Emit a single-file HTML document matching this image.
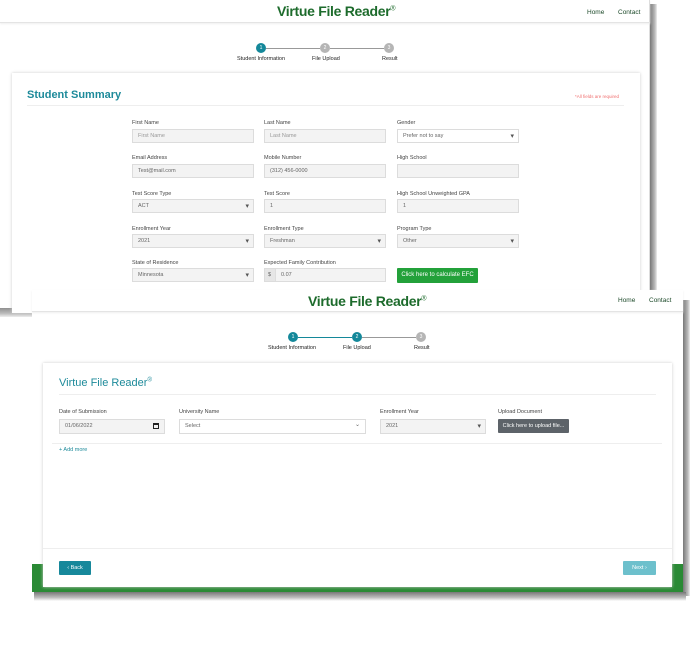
<!DOCTYPE html>
<html><head><meta charset="utf-8"><style>
*{margin:0;padding:0;box-sizing:border-box}
body{width:690px;height:651px;background:#fff;position:relative;overflow:hidden;font-family:"Liberation Sans",sans-serif;color:#333}
.a{position:absolute}
.t{font-size:5.5px;color:#444;white-space:nowrap}
.in{position:absolute;height:14px;background:#f3f3f3;border:1px solid #dcdcdc;font-size:5.5px;color:#666;padding:3px 5px;white-space:nowrap}
.sel:after{content:"▾";position:absolute;right:4px;top:2px;font-size:7px;color:#555}
.ttl{font-size:14px;color:#1d6b2c;font-weight:bold;letter-spacing:-0.3px;white-space:nowrap}
.nav{font-size:6.5px;color:#1d4a2a;white-space:nowrap}
.c{position:absolute;width:10px;height:10px;border-radius:50%;color:#fff;font-size:5px;text-align:center;line-height:10px}
.ln{position:absolute;height:1px}
</style></head><body>
<!-- screen 1 shadows -->
<div class="a" style="left:650px;top:4px;width:7px;height:300px;background:linear-gradient(90deg,#777,#bbb 70%,#eee)"></div>
<div class="a" style="left:0;top:305px;width:40px;height:12px;background:linear-gradient(180deg,#777,#bbb 70%,#eee)"></div>
<!-- screen 1 -->
<div class="a" style="left:0;top:0;width:650px;height:308px;background:#fff;border-right:1px solid #ddd">
 <div class="a" style="left:0;top:0;width:650px;height:23px;border-bottom:1px solid #e4e4e4;box-shadow:0 1px 2px #eee"></div>
 <div class="a ttl" style="left:277px;top:3px">Virtue File Reader<sup style="font-size:7px;font-weight:normal">®</sup></div>
 <div class="a nav" style="left:587px;top:9px">Home</div>
 <div class="a nav" style="left:618px;top:9px">Contact</div>
 <div class="ln" style="left:266px;top:48px;width:54px;background:#999"></div>
 <div class="ln" style="left:330px;top:48px;width:54px;background:#999"></div>
 <div class="c" style="left:256px;top:43px;background:#14889a">1</div>
 <div class="c" style="left:320px;top:43px;background:#b5b5b5">2</div>
 <div class="c" style="left:384px;top:43px;background:#b5b5b5">3</div>
 <div class="a t" style="left:237px;top:56px;color:#222">Student Information</div>
 <div class="a t" style="left:312px;top:56px;color:#222">File Upload</div>
 <div class="a t" style="left:382px;top:56px;color:#222">Result</div>
 <div class="a" style="left:12px;top:73px;width:628px;height:240px;background:#fff;box-shadow:0 0 3px #ccc"></div>
 <div class="a" style="left:27px;top:89px;font-size:11px;color:#1d8a9a;font-weight:bold;white-space:nowrap">Student Summary</div>
 <div class="a" style="left:575px;top:94px;font-size:4.5px;color:#f07070;white-space:nowrap">*All fields are required</div>
 <div class="ln" style="left:27px;top:105px;width:597px;background:#eee"></div>

 <div class="a t" style="left:132px;top:120px">First Name</div>
 <div class="a t" style="left:264px;top:120px">Last Name</div>
 <div class="a t" style="left:397px;top:120px">Gender</div>
 <div class="in" style="left:132px;top:129px;width:122px;color:#999">First Name</div>
 <div class="in" style="left:264px;top:129px;width:122px;color:#999">Last Name</div>
 <div class="in sel" style="left:397px;top:129px;width:122px;background:#fff">Prefer not to say</div>

 <div class="a t" style="left:132px;top:155px">Email Address</div>
 <div class="a t" style="left:264px;top:155px">Mobile Number</div>
 <div class="a t" style="left:397px;top:155px">High School</div>
 <div class="in" style="left:132px;top:164px;width:122px">Test@mail.com</div>
 <div class="in" style="left:264px;top:164px;width:122px">(312) 456-0000</div>
 <div class="in" style="left:397px;top:164px;width:122px"></div>

 <div class="a t" style="left:132px;top:191px">Test Score Type</div>
 <div class="a t" style="left:264px;top:191px">Test Score</div>
 <div class="a t" style="left:397px;top:191px">High School Unweighted GPA</div>
 <div class="in sel" style="left:132px;top:199px;width:122px">ACT</div>
 <div class="in" style="left:264px;top:199px;width:122px">1</div>
 <div class="in" style="left:397px;top:199px;width:122px">1</div>

 <div class="a t" style="left:132px;top:226px">Enrollment Year</div>
 <div class="a t" style="left:264px;top:226px">Enrollment Type</div>
 <div class="a t" style="left:397px;top:226px">Program Type</div>
 <div class="in sel" style="left:132px;top:234px;width:122px">2021</div>
 <div class="in sel" style="left:264px;top:234px;width:122px">Freshman</div>
 <div class="in sel" style="left:397px;top:234px;width:122px">Other</div>

 <div class="a t" style="left:132px;top:260px">State of Residence</div>
 <div class="a t" style="left:264px;top:260px">Expected Family Contribution</div>
 <div class="in sel" style="left:132px;top:268px;width:122px">Minnesota</div>
 <div class="in" style="left:264px;top:268px;width:122px;padding-left:16px">0.07<span class="a" style="left:0;top:0;width:11px;height:12px;background:#e6e6e6;border-right:1px solid #ddd;padding:3px 3px">$</span></div>
 <div class="a" style="left:397px;top:268px;width:81px;height:15px;background:#23a13a;border-radius:1px;color:#fff;font-size:6px;text-align:center;line-height:15px;white-space:nowrap">Click here to calculate EFC</div>
</div>

<!-- screen 2 shadows -->
<div class="a" style="left:683px;top:300px;width:7px;height:296px;background:linear-gradient(90deg,#777,#bbb 70%,#eee)"></div>
<div class="a" style="left:34px;top:592px;width:652px;height:9px;background:linear-gradient(180deg,#777,#bbb 60%,#fff)"></div>
<!-- screen 2 -->
<div class="a" style="left:32px;top:290px;width:651px;height:302px;background:#fff">
 <div class="a" style="left:0;top:0;width:651px;height:22px;border-bottom:1px solid #e4e4e4;box-shadow:0 1px 2px #eee"></div>
 <div class="a ttl" style="left:276px;top:3px">Virtue File Reader<sup style="font-size:7px;font-weight:normal">®</sup></div>
 <div class="a nav" style="left:586px;top:7px">Home</div>
 <div class="a nav" style="left:617px;top:7px">Contact</div>
 <div class="ln" style="left:266px;top:47px;width:54px;background:#14889a"></div>
 <div class="ln" style="left:330px;top:47px;width:54px;background:#999"></div>
 <div class="c" style="left:256px;top:42px;background:#14889a">1</div>
 <div class="c" style="left:320px;top:42px;background:#14889a">2</div>
 <div class="c" style="left:384px;top:42px;background:#b5b5b5">3</div>
 <div class="a t" style="left:236px;top:55px;color:#222">Student Information</div>
 <div class="a t" style="left:311px;top:55px;color:#222">File Upload</div>
 <div class="a t" style="left:382px;top:55px;color:#222">Result</div>
 <div class="a" style="left:0;top:274px;width:651px;height:28px;background:#2a8a35"></div>
 <div class="a" style="left:11px;top:73px;width:629px;height:224px;background:#fff;box-shadow:0 0 3px #ccc"></div>
 <div class="a" style="left:27px;top:87px;font-size:11px;color:#1d8a9a;white-space:nowrap">Virtue File Reader<sup style="font-size:6px">®</sup></div>
 <div class="ln" style="left:27px;top:104px;width:597px;background:#eee"></div>
 <div class="a t" style="left:27px;top:119px">Date of Submission</div>
 <div class="a t" style="left:147px;top:119px">University Name</div>
 <div class="a t" style="left:348px;top:119px">Enrollment Year</div>
 <div class="a t" style="left:466px;top:119px">Upload Document</div>
 <div class="in" style="left:27px;top:129px;width:106px;height:15px">01/06/2022<span class="a" style="right:5px;top:3px;width:6px;height:6px;border:1px solid #222;border-top-width:2px"></span></div>
 <div class="in" style="left:147px;top:129px;width:187px;height:15px;background:#fff">Select<span class="a" style="right:5px;top:1px;font-size:6px">⌄</span></div>
 <div class="in sel" style="left:348px;top:129px;width:106px;height:15px">2021</div>
 <div class="a" style="left:466px;top:129px;width:71px;height:14px;background:#5d6369;color:#fff;font-size:5.5px;text-align:center;line-height:14px;border-radius:1px;white-space:nowrap">Click here to upload file...</div>
 <div class="ln" style="left:20px;top:153px;width:610px;background:#eee"></div>
 <div class="a t" style="left:27px;top:157px;color:#1d8a9a">+ Add more</div>
 <div class="ln" style="left:11px;top:258px;width:629px;background:#eee"></div>
 <div class="a" style="left:27px;top:271px;width:32px;height:14px;background:#17889b;color:#fff;font-size:5.5px;text-align:center;line-height:14px;border-radius:1px">‹ Back</div>
 <div class="a" style="left:591px;top:271px;width:33px;height:14px;background:#6dc0cc;color:#fff;font-size:5.5px;text-align:center;line-height:14px;border-radius:1px">Next ›</div>
</div>
</body></html>
